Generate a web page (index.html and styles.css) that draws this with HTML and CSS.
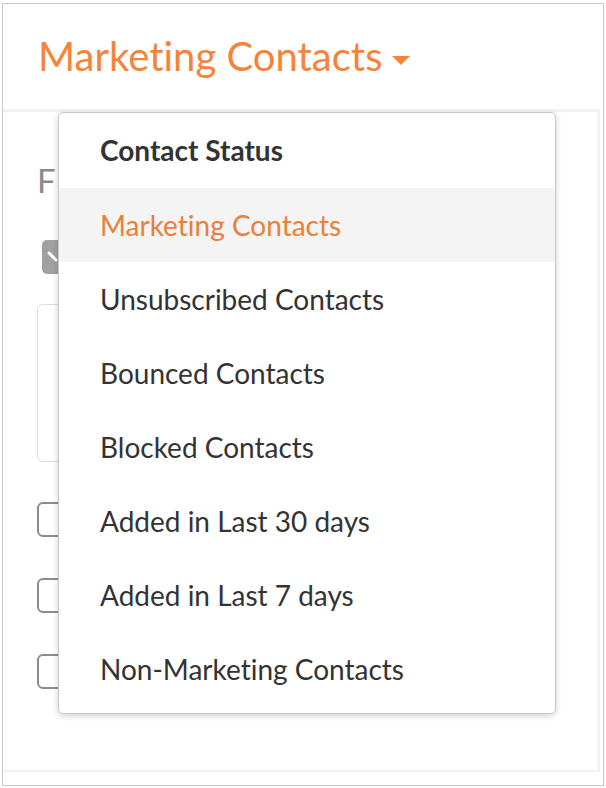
FILE: index.html
```html
<!DOCTYPE html>
<html>
<head>
<meta charset="utf-8">
<link rel="stylesheet" href="styles.css">
</head>
<body>
<div class="frame">
  <header class="head">
    <span class="title">Marketing Contacts</span>
    <span class="caret"></span>
  </header>
  <section class="panel">
    <div class="label">F</div>
    <div class="toggle">
      <svg width="34" height="34" viewBox="0 0 34 34"><path d="M7 13 L14 20" stroke="#fff" stroke-width="3" stroke-linecap="round" fill="none"/></svg>
    </div>
    <div class="textarea"></div>
    <div class="checks">
      <div class="check"></div>
      <div class="check"></div>
      <div class="check"></div>
    </div>
  </section>
  <div class="menu">
    <div class="menu-head">Contact Status</div>
    <div class="item active">Marketing Contacts</div>
    <div class="item">Unsubscribed Contacts</div>
    <div class="item">Bounced Contacts</div>
    <div class="item">Blocked Contacts</div>
    <div class="item">Added in Last 30 days</div>
    <div class="item">Added in Last 7 days</div>
    <div class="item">Non-Marketing Contacts</div>
  </div>
</div>
</body>
</html>
```
FILE: styles.css
```css
* { box-sizing: border-box; }
html, body { margin: 0; padding: 0; background: #fff; }
body { font-family: Lato, "Open Sans", sans-serif; }

.frame {
  position: relative;
  margin: 3px 2px 0 2px;
  width: 602px;
  height: 783px;
  border: 1px solid #c9c9c9;
  display: flex;
  flex-direction: column;
}

.head {
  height: 105px;
  padding-left: 35px;
  display: flex;
  align-items: center;
  gap: 10px;
  padding-bottom: 2px;
}
.title {
  font-size: 40px;
  color: #f5843a;
  font-variant-ligatures: none;
}
.caret {
  width: 0; height: 0;
  border-left: 9px solid transparent;
  border-right: 9px solid transparent;
  border-top: 9px solid #f5843a;
  margin-top: 10px;
}

.panel {
  flex: 1;
  margin: 0 3px 13px 0;
  border-top: 3px solid #eef3f7;
  border-right: 3px solid #eef3f7;
  border-bottom: 2px solid #eef3f7;
  padding: 50px 0 0 34px;
  display: flex;
  flex-direction: column;
}
.label {
  font-size: 33px;
  color: #8a8a8a;
  line-height: 36px;
}
.toggle {
  margin: 42px 0 0 5px;
  width: 40px;
  height: 34px;
  border-radius: 5px;
  background: #a0a0a0;
}
.toggle svg { display: block; }
.textarea {
  margin-top: 30px;
  width: 200px;
  height: 158px;
  border: 1px solid #dcdcdc;
  border-radius: 6px;
}
.checks {
  margin-top: 40px;
  display: flex;
  flex-direction: column;
  gap: 41px;
}
.check {
  width: 36px;
  height: 35px;
  border: 2px solid #8c8c8c;
  border-radius: 6px;
}

.menu {
  position: absolute;
  left: 55px;
  top: 108px;
  width: 498px;
  height: 602px;
  background: #fff;
  border: 1px solid #c8c8c8;
  border-radius: 5px;
  box-shadow: 0 2px 6px rgba(0,0,0,0.18);
  padding-bottom: 6px;
}
.menu-head {
  height: 75px;
  padding-left: 41px;
  display: flex;
  align-items: center;
  font-size: 28px;
  font-weight: bold;
  color: #333;
  padding-bottom: 2px;
}
.item {
  height: 74px;
  padding-left: 41px;
  display: flex;
  align-items: center;
  font-size: 28px;
  color: #333;
  font-variant-ligatures: none;
}
.item.active {
  background: #f4f4f4;
  color: #e8803a;
}
```
